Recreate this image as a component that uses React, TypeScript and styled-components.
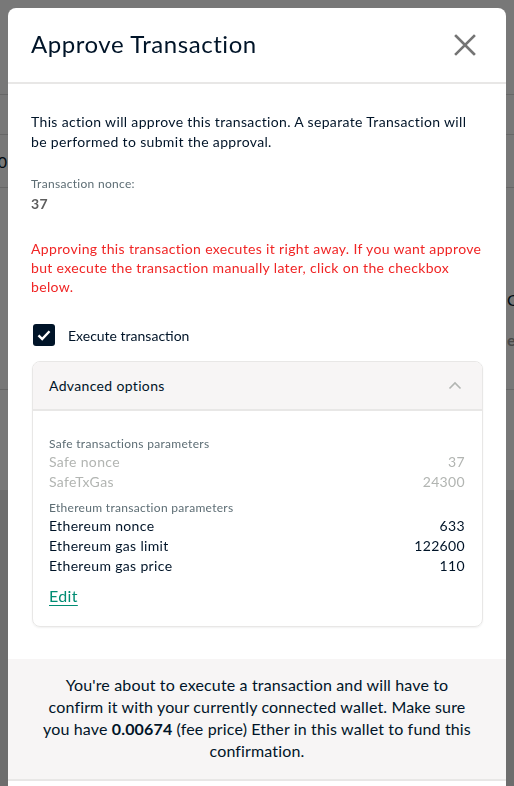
import React from "react";
import styled, { createGlobalStyle } from "styled-components";

const GlobalStyle = createGlobalStyle`
  html, body {
    margin: 0;
    padding: 0;
    width: 514px;
    height: 786px;
    overflow: hidden;
    font-family: "Lato", "Liberation Sans", sans-serif;
    -webkit-font-smoothing: antialiased;
  }
  * { box-sizing: border-box; }
`;

const navy = "#001428";
const line = "#e8e7e6";

/* ---------- page behind the dialog ---------- */

const Page = styled.div`
  width: 514px;
  height: 786px;
  display: flex;
  flex-direction: column;
  background: #e8e8e8;
  font-size: 16px;
  color: ${navy};
`;

const PageSection = styled.div<{ $h: number; $border?: boolean }>`
  height: ${(p) => p.$h}px;
  flex: none;
  background: #ffffff;
  border-bottom: ${(p) => (p.$border ? "1px solid #dcdcdc" : "none")};
  display: flex;
  align-items: center;
  justify-content: space-between;
`;

const EdgeLeft = styled.span`
  width: 7px;
  overflow: hidden;
  direction: rtl;
  white-space: nowrap;
`;

const EdgeRight = styled.span<{ $muted?: boolean }>`
  width: 7px;
  line-height: 20px;
  overflow: hidden;
  white-space: nowrap;
  color: ${(p) => (p.$muted ? "#9a9a9a" : navy)};
  font-weight: ${(p) => (p.$muted ? 700 : 400)};
`;

const RightStack = styled.div`
  align-self: flex-start;
  padding-top: 102px;
  display: flex;
  flex-direction: column;
  gap: 20px;
`;

const Backdrop = styled.div`
  position: fixed;
  inset: 0;
  background: rgba(0, 0, 0, 0.53);
`;

/* ---------- dialog ---------- */

const Modal = styled.div`
  position: fixed;
  top: 8px;
  left: 8px;
  width: 498px;
  height: 800px;
  background: #ffffff;
  border-radius: 8px 8px 0 0;
  display: flex;
  flex-direction: column;
  overflow: hidden;
  letter-spacing: 0.34px;
`;

const Header = styled.header`
  height: 76px;
  flex: none;
  padding: 0 30px 0 23px;
  display: flex;
  align-items: center;
  justify-content: space-between;
  border-bottom: 2px solid ${line};
`;

const Title = styled.h2`
  margin: 0 0 3px;
  font-size: 24px;
  font-weight: 400;
  color: ${navy};
  letter-spacing: 0.55px;
`;

const CloseButton = styled.button`
  border: none;
  background: none;
  padding: 0;
  width: 22px;
  height: 22px;
  display: flex;
  cursor: pointer;
`;

const Body = styled.div`
  padding: 28px 23px 32px 23px;
  display: flex;
  flex-direction: column;
`;

const Text = styled.p<{ $tone?: "error" }>`
  margin: 0;
  font-size: 14px;
  line-height: 19.5px;
  color: ${(p) => (p.$tone === "error" ? "#f02525" : navy)};
`;

const NonceBlock = styled.div`
  margin-top: 25px;
  display: flex;
  flex-direction: column;
  gap: 2px;
`;

const SmallLabel = styled.span`
  font-size: 12px;
  line-height: 16px;
  color: #5d6d74;
  letter-spacing: 0.3px;
`;

const NonceValue = styled.span`
  font-size: 14px;
  line-height: 20px;
  font-weight: 700;
  color: #5d5d5d;
`;

const Warning = styled(Text)`
  margin-top: 25px;
  line-height: 19px;
`;

const CheckRow = styled.label`
  margin-top: 28px;
  padding-left: 2px;
  display: flex;
  align-items: center;
  gap: 13px;
  font-size: 14px;
  letter-spacing: 0;
  color: ${navy};
`;

const CheckBox = styled.span`
  width: 22px;
  height: 22px;
  border-radius: 3px;
  background: ${navy};
  display: flex;
  align-items: center;
  justify-content: center;
`;

const Card = styled.section`
  margin: 15px 0 0 1px;
  border: 1px solid ${line};
  border-radius: 8px;
  overflow: hidden;
  box-shadow: 0 1px 2px rgba(0, 0, 0, 0.06);
`;

const CardHead = styled.div`
  height: 49px;
  padding: 0 20px 0 16px;
  background: #f7f5f5;
  border-bottom: 2px solid ${line};
  display: flex;
  align-items: center;
  justify-content: space-between;
  font-size: 14px;
  color: ${navy};
`;

const CardBody = styled.div`
  padding: 25px 17px 20px 16px;
  display: flex;
  flex-direction: column;
`;

const GroupLabel = styled(SmallLabel)<{ $gap?: number }>`
  margin-top: ${(p) => p.$gap ?? 0}px;
`;

const ParamRow = styled.div<{ $muted?: boolean }>`
  display: flex;
  justify-content: space-between;
  font-size: 14px;
  line-height: 20px;
  color: ${(p) => (p.$muted ? "#b2b5b2" : navy)};
`;

const EditLink = styled.a`
  margin-top: 10px;
  align-self: flex-start;
  font-size: 16px;
  line-height: 20px;
  color: #008c73;
  text-decoration: underline;
  text-underline-offset: 3px;
  cursor: pointer;
`;

const Footer = styled.footer`
  flex: none;
  background: #f7f5f5;
  padding: 15px 33px 17px;
  border-bottom: 2px solid ${line};
  text-align: center;
  font-size: 16px;
  line-height: 22px;
  letter-spacing: 0.15px;
  color: ${navy};
`;

const safeParams = [
  { label: "Safe nonce", value: "37" },
  { label: "SafeTxGas", value: "24300" },
];

const ethParams = [
  { label: "Ethereum nonce", value: "633" },
  { label: "Ethereum gas limit", value: "122600" },
  { label: "Ethereum gas price", value: "110" },
];

export default function App() {
  return (
    <>
      <GlobalStyle />
      <Page>
        <PageSection $h={95} $border />
        <PageSection $h={40} $border />
        <PageSection $h={53} $border>
          <EdgeLeft>100</EdgeLeft>
        </PageSection>
        <PageSection $h={202} $border>
          <span />
          <RightStack>
            <EdgeRight>Confirm</EdgeRight>
            <EdgeRight $muted>executed</EdgeRight>
          </RightStack>
        </PageSection>
        <PageSection $h={100} />
      </Page>
      <Backdrop />
      <Modal role="dialog" aria-labelledby="approve-title">
        <Header>
          <Title id="approve-title">Approve Transaction</Title>
          <CloseButton aria-label="Close">
            <svg width="22" height="22" viewBox="0 0 22 22">
              <path d="M2 2 L20 20 M20 2 L2 20" stroke="#757575" strokeWidth="2.6" strokeLinecap="square" />
            </svg>
          </CloseButton>
        </Header>
        <Body>
          <Text>
            This action will approve this transaction. A separate Transaction will be performed to submit the approval.
          </Text>
          <NonceBlock>
            <SmallLabel>Transaction nonce:</SmallLabel>
            <NonceValue>37</NonceValue>
          </NonceBlock>
          <Warning $tone="error">
            Approving this transaction executes it right away. If you want approve but execute the transaction manually
            later, click on the checkbox below.
          </Warning>
          <CheckRow>
            <CheckBox>
              <svg width="16" height="16" viewBox="0 0 16 16">
                <path d="M2.5 8.3 L6.2 12 L13.5 4.2" fill="none" stroke="#ffffff" strokeWidth="2.4" />
              </svg>
            </CheckBox>
            Execute transaction
          </CheckRow>
          <Card>
            <CardHead>
              Advanced options
              <svg width="14" height="9" viewBox="0 0 14 9">
                <path d="M1.5 7.5 L7 2 L12.5 7.5" fill="none" stroke="#b2b5b2" strokeWidth="1.6" />
              </svg>
            </CardHead>
            <CardBody>
              <GroupLabel>Safe transactions parameters</GroupLabel>
              {safeParams.map((p) => (
                <ParamRow key={p.label} $muted>
                  <span>{p.label}</span>
                  <span>{p.value}</span>
                </ParamRow>
              ))}
              <GroupLabel $gap={8}>Ethereum transaction parameters</GroupLabel>
              {ethParams.map((p) => (
                <ParamRow key={p.label}>
                  <span>{p.label}</span>
                  <span>{p.value}</span>
                </ParamRow>
              ))}
              <EditLink>Edit</EditLink>
            </CardBody>
          </Card>
        </Body>
        <Footer>
          You're about to execute a transaction and will have to confirm it with your currently connected wallet. Make
          sure you have <b>0.00674</b> (fee price) Ether in this wallet to fund this confirmation.
        </Footer>
      </Modal>
    </>
  );
}
